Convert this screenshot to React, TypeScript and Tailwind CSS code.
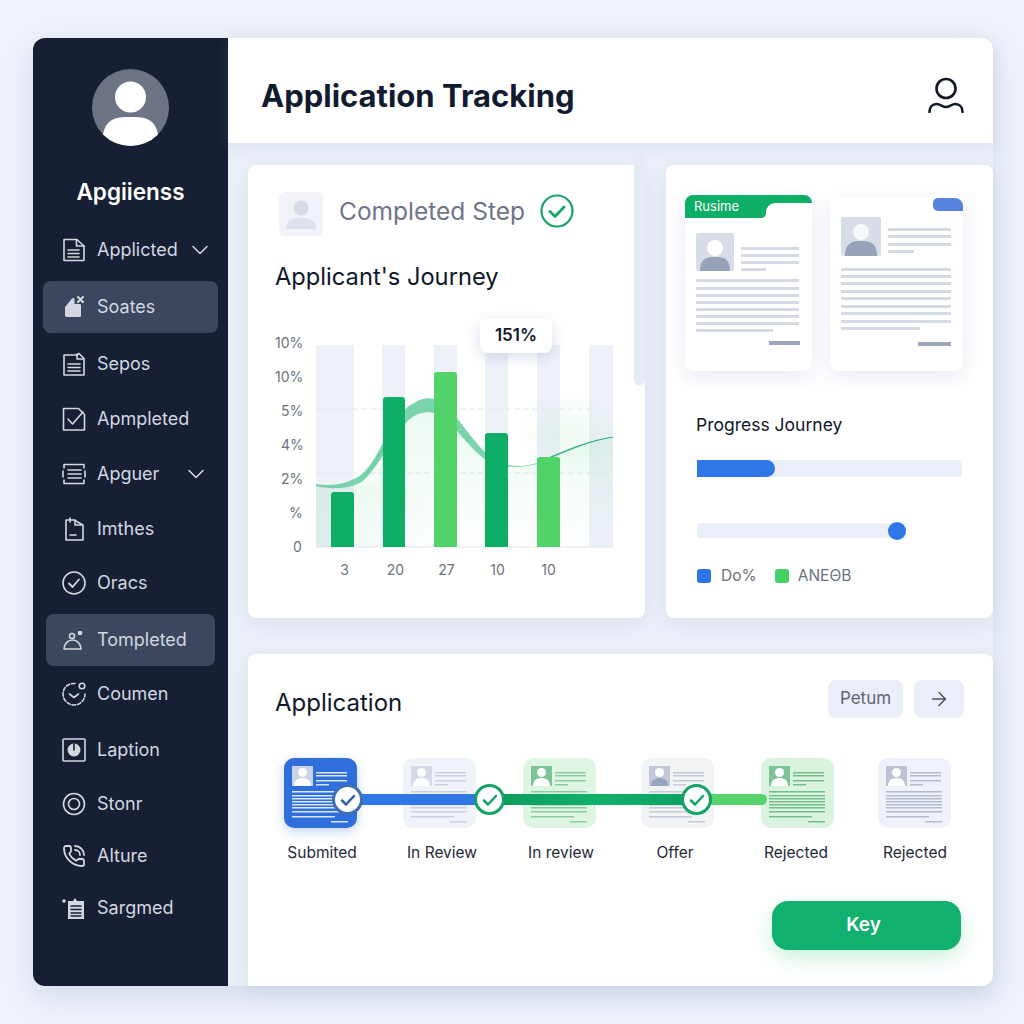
import { ArrowRight, ChevronDown, PhoneCall } from "lucide-react";
import type { ReactNode } from "react";

const iconProps = {
  width: 24,
  height: 24,
  viewBox: "0 0 24 24",
  fill: "none",
  stroke: "currentColor",
  strokeWidth: 1.6,
  strokeLinecap: "round" as const,
  strokeLinejoin: "round" as const,
  className: "shrink-0",
};

const AppliedIcon = () => (
  <svg {...iconProps}>
    <path d="M2 1.500h13l7 6.500v14.500H2z" />
    <path d="M14.500 1.500V8H22M6 12h11M6 15.500h11M6 19h11" />
  </svg>
);

const SoatesIcon = () => (
  <svg {...iconProps}>
    <path d="M3 12l7-8.500c1-1 2.500-.5 2.500 1V9h5c1 0 1.500.5 1.500 1.500V21a1 1 0 0 1-1 1H5c-1.200 0-2-.8-2-2z" fill="currentColor" stroke="none" />
    <path d="M16 2l5 5M21 2l-5 5" strokeWidth={2} />
  </svg>
);

const SeposIcon = () => (
  <svg {...iconProps}>
    <path d="M2 3h13l2-1.500 5 5V23H2z" />
    <path d="M15 2v5h7M6 12h12M6 15.500h12M6 19h12" />
  </svg>
);

const ApmpletedIcon = () => (
  <svg {...iconProps}>
    <path d="M1.500 1.500h15l6 6V23h-21z" />
    <path d="M6 12l4.500 5L21 5" />
  </svg>
);

const ApguerIcon = () => (
  <svg {...iconProps}>
    <path d="M2 6V2.500h20V6M2 18v3.500h20V18M1 9v6M23 9v6" />
    <path d="M6 8h13M6 12h13M6 16h13" />
  </svg>
);

const ImthesIcon = () => (
  <svg {...iconProps}>
    <path d="M12 3H4v20h17V8z" />
    <path d="M8 1v4M13 3v5h7M8 18h6" />
  </svg>
);

const OracsIcon = () => (
  <svg {...iconProps}>
    <circle cx="12" cy="12" r="11" />
    <path d="M7 12.500l3.500 3.500L17 8.500" strokeWidth={1.8} />
  </svg>
);

const TompletedIcon = () => (
  <svg {...iconProps}>
    <circle cx="10" cy="8" r="2.500" />
    <path d="M2 21c0-5 4-9 8.500-9s8.500 4 8.500 9z" />
    <circle cx="18" cy="5" r="2.300" fill="currentColor" stroke="none" />
  </svg>
);

const CoumenIcon = () => (
  <svg {...iconProps}>
    <path d="M13 1.500C6 1 1 6 1 12s5 11 11 11 11-5 11-11" strokeDasharray="3.500 2" />
    <circle cx="20" cy="4" r="2.800" />
    <path d="M7.500 12l4.500 3.500 4.500-3.500" />
  </svg>
);

const LaptionIcon = () => (
  <svg {...iconProps}>
    <rect x="1" y="1" width="22" height="22" rx="1" />
    <circle cx="12" cy="12" r="6.500" fill="currentColor" stroke="none" />
    <path d="M12 6v6" stroke="#161f33" />
  </svg>
);

const StonrIcon = () => (
  <svg {...iconProps}>
    <circle cx="12" cy="12" r="10.500" />
    <circle cx="12" cy="12" r="5.500" />
  </svg>
);

const SargmedIcon = () => (
  <svg {...iconProps}>
    <path d="M6 5h5l2-3 2 3h7v18H6z" fill="currentColor" stroke="none" />
    <path d="M9 10h10M9 13.500h10M9 17h10M9 20h10" stroke="#161f33" />
    <circle cx="2" cy="5" r="1.800" fill="currentColor" stroke="none" />
  </svg>
);

type NavItem = { label: string; icon: ReactNode; gap: string; chevron?: string };

const navItems: NavItem[] = [
  { label: "Applicted", icon: <AppliedIcon />, gap: "mt-0 pl-[29px]", chevron: "ml-[8px]" },
  { label: "Soates", icon: <SoatesIcon />, gap: "mt-[5px] mx-[10px] bg-[#3c465f] pl-[19px]" },
  { label: "Sepos", icon: <SeposIcon />, gap: "mt-[5px] pl-[29px]" },
  { label: "Apmpleted", icon: <ApmpletedIcon />, gap: "mt-[3px] pl-[29px]" },
  { label: "Apguer", icon: <ApguerIcon />, gap: "mt-[3px] pl-[29px]", chevron: "ml-[23px]" },
  { label: "Imthes", icon: <ImthesIcon />, gap: "mt-[3px] pl-[29px]" },
  { label: "Oracs", icon: <OracsIcon />, gap: "mt-[2px] pl-[29px]" },
  { label: "Tompleted", icon: <TompletedIcon />, gap: "mt-[5px] mx-[13px] bg-[#3c465f] pl-[16px]" },
  { label: "Coumen", icon: <CoumenIcon />, gap: "mt-[2px] pl-[29px]" },
  { label: "Laption", icon: <LaptionIcon />, gap: "mt-[4px] pl-[29px]" },
  { label: "Stonr", icon: <StonrIcon />, gap: "mt-[2px] pl-[29px]" },
  { label: "Alture", icon: <PhoneCall size={24} strokeWidth={1.8} className="shrink-0" />, gap: "mt-0 pl-[29px]" },
  { label: "Sargmed", icon: <SargmedIcon />, gap: "mt-0 pl-[29px]" },
];

function Sidebar() {
  return (
    <aside className="w-[195px] shrink-0 rounded-l-xl bg-[#161f33] pt-[31px] text-[#d3d7e0]">
      <div className="mx-auto flex h-[77px] w-[77px] items-center justify-center overflow-hidden rounded-full bg-[#6d7486]">
        <svg width="77" height="77" viewBox="0 0 77 77">
          <circle cx="38.500" cy="28" r="15.500" fill="#fff" />
          <path d="M10 77c0-28 13-29 28.500-29S67 49 67 77z" fill="#fff" />
        </svg>
      </div>
      <div className="mt-[31px] text-center text-[22.500px] leading-[30px] font-semibold text-white">Apgiienss</div>
      <nav className="mt-[17px] flex flex-col">
        {navItems.map((item) => (
          <div key={item.label} className={`flex h-[52px] items-center rounded-lg ${item.gap}`}>
            <span className="flex w-[24px] shrink-0 justify-center">{item.icon}</span>
            <span className="ml-[11px] text-[18px] leading-none">{item.label}</span>
            {item.chevron && <ChevronDown size={28} strokeWidth={1.3} className={`shrink-0 ${item.chevron}`} />}
          </div>
        ))}
      </nav>
    </aside>
  );
}

function JourneyChart() {
  const stripes = [
    [0, 38],
    [66, 23],
    [118, 23],
    [169, 23],
    [221, 23],
    [273, 24],
  ];
  const bars = [
    [15, 147, 23, "#0fae66"],
    [67, 52, 22, "#0fae66"],
    [118, 27, 23, "#52d36a"],
    [169, 88, 23, "#0fae66"],
    [221, 112, 23, "#52d36a"],
  ] as const;

  return (
    <div className="relative mt-[43px] flex">
      <div className="flex h-[220px] w-[27px] flex-col items-start justify-between text-[14px] leading-4 text-[#6b7280]">
        {["10%", "10%", "5%", "4%", "2%", "%", "0"].map((t, i) => (
          <span key={i} className={t === "%" ? "ml-[14px]" : t === "0" ? "ml-[18px]" : t === "10%" ? "" : "ml-[6px]"}>
            {t}
          </span>
        ))}
      </div>
      <div className="ml-[14px] pt-[10px]">
        <svg width="297" height="203" viewBox="0 0 297 203" className="block">
          <defs>
            <linearGradient id="areaFill" x1="0" y1="0" x2="0" y2="1">
              <stop offset="0" stopColor="#34c77b" stopOpacity="0.1" />
              <stop offset="1" stopColor="#34c77b" stopOpacity="0.01" />
            </linearGradient>
            <radialGradient id="glow" cx="0.5" cy="0.5" r="0.5">
              <stop offset="0" stopColor="#47d07f" stopOpacity="0.1" />
              <stop offset="1" stopColor="#47d07f" stopOpacity="0" />
            </radialGradient>
            <linearGradient id="leftFill" x1="0" y1="0" x2="1" y2="0">
              <stop offset="0" stopColor="#2fbf77" stopOpacity="0.08" />
              <stop offset="1" stopColor="#2fbf77" stopOpacity="0" />
            </linearGradient>
          </defs>
          {stripes.map(([x, w]) => (
            <rect key={x} x={x} y="0" width={w} height="202" fill="#eef1f8" />
          ))}
          <rect x="0" y="140" width="120" height="62" fill="url(#leftFill)" />
          <ellipse cx="255" cy="90" rx="55" ry="45" fill="url(#glow)" />
          <path d="M0 64H297M0 128H297" stroke="#e2e6ee" strokeDasharray="6 3" />
          <g transform="translate(0 10)">
            <path
              d="M0 129C12 132 30 132 46 119C66 102 74 58 100 47C108 42 118 42 126 48C142 60 160 92 176 103C190 112 204 113 221 108C245 98 270 86 297 82V192H0Z"
              fill="url(#areaFill)"
            />
            <path
              d="M0 129C12 131 30 131 46 119C66 102 74 58 100 47C108 42 118 42 126 48C142 60 160 92 176 103C190 112 204 113 221 108C245 98 270 86 297 82C270 87 245 99 221 109C204 113 190 113 176 108C160 102 142 74 126 62C118 56 108 56 100 60C80 70 66 110 46 127C30 135 12 134 0 131Z"
              fill="#5fcb9a"
              fillOpacity="0.8"
            />
            <path d="M221 108C245 98 270 86 297 82" fill="none" stroke="#35b27c" strokeWidth="1.200" />
          </g>
          <line x1="0" y1="202" x2="297" y2="202" stroke="#e3e6ee" />
          {bars.map(([x, y, w, color]) => (
            <path
              key={x}
              d={`M${x} 202V${y + 3}a3 3 0 0 1 3-3h${w - 6}a3 3 0 0 1 3 3V202Z`}
              fill={color}
            />
          ))}
          <path d="M46 134C54 125 62 113 67 102" fill="none" stroke="#3cc58a" strokeOpacity="0.5" />
        </svg>
        <div className="mt-[14px] flex pl-[3px] text-[14px] leading-4 text-[#6b7280]">
          {["3", "20", "27", "10", "10"].map((t, i) => (
            <span key={i} className="w-[51px] text-center">
              {t}
            </span>
          ))}
        </div>
      </div>
      <div className="absolute left-[205px] top-[-17px] flex h-[35px] w-[72px] items-center justify-center rounded-lg bg-white text-[17px] font-semibold text-[#111827] shadow-[0_4px_14px_rgba(120,135,190,0.28)]">
        151%
      </div>
    </div>
  );
}

function ResumeLeft() {
  return (
    <div className="relative h-[176px] w-[127px] rounded-lg bg-white shadow-[0_6px_20px_rgba(130,145,195,0.18)]">
      <svg width="127" height="176" viewBox="0 0 127 176" className="block">
        <path d="M0 23V8a8 8 0 0 1 8-8h111a8 8 0 0 1 8 8H90a9 9 0 0 0-9 9a5 5 0 0 1-5 6Z" fill="#0fae66" />
        <rect x="11" y="38" width="38" height="38" rx="2" fill="#d7dce8" />
        <circle cx="30" cy="53" r="8" fill="#fff" />
        <path d="M15 76c0-12 6-14 15-14s15 2 15 14z" fill="#98a3ba" />
        {[52, 59, 66].map((y) => (
          <rect key={y} x="56" y={y} width="58" height="3" fill="#d6dae6" />
        ))}
        <rect x="56" y="73" width="25" height="3" fill="#d6dae6" />
        {[84, 92, 99, 106, 113, 120, 127].map((y) => (
          <rect key={y} x="11" y={y} width="103" height="3" fill="#d6dae6" />
        ))}
        <rect x="11" y="134" width="77" height="3" fill="#d6dae6" />
        <rect x="84" y="146" width="31" height="4" fill="#9ca6b9" />
      </svg>
      <span className="absolute left-[9px] top-[3px] text-[13px] leading-4 text-white">Rusime</span>
    </div>
  );
}

function ResumeRight() {
  return (
    <div className="relative mt-[2px] h-[174px] w-[133px] rounded-lg bg-white shadow-[0_6px_20px_rgba(130,145,195,0.18)]">
      <svg width="133" height="174" viewBox="0 0 133 174" className="block">
        <path d="M103 6a5 5 0 0 1 5-5h17a8 8 0 0 1 8 8v5h-25a5 5 0 0 1-5-5Z" fill="#5682dd" />
        <rect x="11" y="20" width="40" height="39" rx="2" fill="#d7dce8" />
        <circle cx="31" cy="35" r="8" fill="#f7f8fb" />
        <path d="M15 59c0-13 7-15 16-15s16 2 16 15z" fill="#98a3ba" />
        {[31, 38, 46].map((y) => (
          <rect key={y} x="58" y={y} width="63" height="3" fill="#d6dae6" />
        ))}
        <rect x="58" y="53" width="26" height="3" fill="#d6dae6" />
        {[71, 78, 85, 93, 100, 108, 115, 123].map((y) => (
          <rect key={y} x="11" y={y} width="110" height="3" fill="#d6dae6" />
        ))}
        <rect x="11" y="130" width="79" height="3" fill="#d6dae6" />
        <rect x="88" y="145" width="33" height="4" fill="#9ca6b9" />
      </svg>
    </div>
  );
}

type Tone = { bg: string; photo: string; body: string; head: string; line: string };

const tones: Record<string, Tone> = {
  blue: { bg: "#2f6fdc", photo: "#c9d3e8", body: "#fff", head: "#fff", line: "#dbe7fc" },
  gray: { bg: "#f1f3fa", photo: "#d5d9e8", body: "#fff", head: "#fff", line: "#cbd0e0" },
  mint: { bg: "#dff5e3", photo: "#7cc495", body: "#fff", head: "#fff", line: "#8ccb9f" },
  offer: { bg: "#f2f3f5", photo: "#c3c9db", body: "#98a5c0", head: "#fff", line: "#c5cad6" },
  green: { bg: "#d9f3df", photo: "#7cc495", body: "#fff", head: "#fff", line: "#74bd8c" },
  slate: { bg: "#eff2fa", photo: "#bcc3d3", body: "#fff", head: "#fff", line: "#b5bbcf" },
};

function DocThumb({ tone }: { tone: Tone }) {
  return (
    <svg width="73" height="70" viewBox="0 0 73 70" className="block">
      <rect width="73" height="70" rx="10" fill={tone.bg} />
      <rect x="8" y="8" width="21" height="20" fill={tone.photo} />
      <circle cx="18.500" cy="14.500" r="4.500" fill={tone.head} />
      <path d="M10 28c0-6 4-8 8.500-8s8.500 2 8.500 8z" fill={tone.body} />
      {[14, 17, 22].map((y) => (
        <rect key={y} x="32" y={y} width="31" height="1.500" fill={tone.line} />
      ))}
      <rect x="32" y="26" width="13" height="1.500" fill={tone.line} />
      {[33, 37, 40, 43, 46, 49, 53].map((y) => (
        <rect key={y} x="8" y={y} width="56" height="1.500" fill={tone.line} />
      ))}
      <rect x="8" y="58" width="43" height="1.500" fill={tone.line} />
      <rect x="47" y="63" width="17" height="1.500" fill={tone.line} />
    </svg>
  );
}

function CheckBadge({ left, ring, mark }: { left: string; ring: string; mark: string }) {
  return (
    <span className={`absolute top-[26px] flex h-[31px] w-[31px] items-center justify-center rounded-full border-[3px] bg-white ${left} ${ring}`}>
      <svg width="18" height="18" viewBox="0 0 18 18" fill="none">
        <path d="M3 9.500l4 4 8-8.500" stroke={mark} strokeWidth="2.500" strokeLinecap="round" strokeLinejoin="round" />
      </svg>
    </span>
  );
}

const steps = [
  { label: "Submited", tone: tones.blue, box: "shadow-[0_4px_12px_rgba(47,111,220,0.28)]", shift: "translate-x-[1.500px]" },
  { label: "In Review", tone: tones.gray, box: "ml-[46px]", shift: "translate-x-[2.500px]" },
  { label: "In review", tone: tones.mint, box: "ml-[47px]", shift: "translate-x-[1.500px]" },
  { label: "Offer", tone: tones.offer, box: "ml-[45px]", shift: "-translate-x-[2.500px]" },
  { label: "Rejected", tone: tones.green, box: "ml-[47px]", shift: "-translate-x-[1.500px]" },
  { label: "Rejected", tone: tones.slate, box: "ml-[44px]", shift: "translate-x-[0.500px]" },
];

export default function App() {
  return (
    <div className="min-h-screen bg-[#eef2fa] pl-[33px] pt-[38px] font-['Inter',sans-serif]">
      <div className="flex h-[948px] w-[960px] rounded-xl shadow-[0_10px_30px_rgba(120,135,185,0.22)]">
        <Sidebar />
        <main className="flex min-w-0 flex-1 flex-col rounded-r-xl bg-[#ebeff8]">
          <header className="flex h-[105px] items-center justify-between rounded-tr-xl bg-white pl-[33px] pr-[29px] pt-[9px] shadow-[0_4px_16px_rgba(120,135,185,0.14)]">
            <h1 className="text-[31px] font-bold leading-none text-[#111a2e]">Application Tracking</h1>
            <svg width="36" height="36" viewBox="0 0 36 36" fill="none" stroke="#111827" strokeWidth="2.600" strokeLinecap="round">
              <circle cx="18" cy="11.500" r="9.500" />
              <path d="M1.500 35c0-5 3-8 7-8 4 0 6 3 9.500 3s5.500-3 9.500-3c4 0 7 3 7 8" />
            </svg>
          </header>

          <div className="flex flex-1 flex-col pl-[20px] pt-[22px]">
            <div className="flex h-[453px] gap-[21px]">
              {/* Journey */}
              <section className="relative w-[397px] rounded-lg bg-white pl-[27px] pt-[27px] shadow-[0_6px_20px_rgba(120,135,185,0.14)]">
                <div className="absolute right-0 top-[-10px] h-[230px] w-[11px] rounded-b-md bg-[#e6eaf5]" />
                <div className="flex items-center pl-[4px]">
                  <div className="flex h-[44px] w-[44px] items-center justify-center rounded-md bg-[#f1f3f9]">
                    <svg width="32" height="32" viewBox="0 0 32 32">
                      <circle cx="16" cy="10" r="7.500" fill="#d6d9e6" />
                      <path d="M1 31c0-9 6-11 15-11s15 2 15 11z" fill="#dde1ec" />
                    </svg>
                  </div>
                  <span className="mb-[6px] ml-[16px] text-[24.500px] leading-none text-[#6f7488]">Completed Step</span>
                  <svg className="mb-[7px] ml-[15px]" width="34" height="34" viewBox="0 0 34 34" fill="none" stroke="#17a566" strokeLinecap="round" strokeLinejoin="round">
                    <circle cx="17" cy="17" r="15.500" strokeWidth="2.200" />
                    <path d="M10 17.500l5 5 9-9.500" strokeWidth="2.800" />
                  </svg>
                </div>
                <h2 className="mt-[26px] text-[23.700px] font-normal leading-[30px] text-[#0f172a]">Applicant's Journey</h2>
                <JourneyChart />
              </section>

              {/* Resumes and progress */}
              <section className="flex-1 rounded-lg bg-white pl-[19px] pt-[30px] shadow-[0_6px_20px_rgba(120,135,185,0.14)]">
                <div className="flex gap-[18px]">
                  <ResumeLeft />
                  <ResumeRight />
                </div>
                <div className="pl-[12px]">
                  <h3 className="-ml-[1px] mt-[42px] text-[17.500px] font-normal leading-6 text-[#0f172a]">Progress Journey</h3>
                  <div className="mt-[23px] h-[17px] w-[265px] rounded bg-[#e9eef8]">
                    <div className="h-full w-[78px] rounded-l rounded-r-full bg-[#2f76e6]" />
                  </div>
                  <div className="relative mt-[46px] h-[15px] w-[209px] rounded-l bg-[#e9eef8]">
                    <span className="absolute right-0 top-[-1.500px] h-[18px] w-[18px] rounded-full bg-[#2f76e6]" />
                  </div>
                  <div className="mt-[28px] flex items-center text-[15.500px] leading-5 text-[#6b7082]">
                    <span className="h-[14px] w-[14px] rounded-[3px] bg-[#2f76e6]" />
                    <span className="ml-[10px]">Do%</span>
                    <span className="ml-[18px] h-[14px] w-[14px] rounded-[3px] bg-[#46cf67]" />
                    <span className="ml-[9px]">ANEΘB</span>
                  </div>
                </div>
              </section>
            </div>

            {/* Application steps */}
            <section className="mt-[36px] flex-1 rounded-t-lg rounded-br-xl bg-white pt-[26px] shadow-[0_6px_20px_rgba(120,135,185,0.14)]">
              <div className="flex items-center justify-between pl-[27px] pr-[29px]">
                <h2 className="pt-[8px] text-[24px] font-normal leading-none text-[#0f172a]">Application</h2>
                <div className="flex gap-[11px]">
                  <button className="flex h-[38px] w-[75px] items-center justify-center rounded-lg bg-[#eaeef8] text-[17px] text-[#5f6577]">Petum</button>
                  <button className="flex h-[38px] w-[50px] items-center justify-center rounded-lg bg-[#eaeef8] text-[#4b5163]">
                    <ArrowRight size={22} strokeWidth={1.6} />
                  </button>
                </div>
              </div>
              <div className="relative ml-[36px] mr-[42px] mt-[40px] flex">
                {steps.map((step, i) => (
                  <div key={i} className={`flex w-[73px] flex-col items-center ${i === 0 ? "" : step.box}`}>
                    <div className={`rounded-[10px] ${i === 0 ? step.box : ""}`}>
                      <DocThumb tone={step.tone} />
                    </div>
                    <span className={`mt-[16px] whitespace-nowrap text-[15.500px] leading-[18px] text-[#1f2937] ${step.shift}`}>{step.label}</span>
                  </div>
                ))}
                <div className="absolute left-[76px] top-[36px] flex h-[11px] w-[407px] overflow-hidden rounded-r-full">
                  <div className="w-[130px] bg-[#2f76e6]" />
                  <div className="w-[210px] bg-linear-to-r from-[#0d9a5c] via-[#10b06a] to-[#0d9f60]" />
                  <div className="flex-1 bg-[#55d36c]" />
                </div>
                <CheckBadge left="left-[48px]" ring="border-[#3f6fb5]" mark="#2f5fa8" />
                <CheckBadge left="left-[190px]" ring="border-[#12a365]" mark="#12a365" />
                <CheckBadge left="left-[397px]" ring="border-[#12a365]" mark="#12a365" />
              </div>
              <div className="mt-[39px] flex justify-end pr-[32px]">
                <button className="flex h-[49px] w-[189px] items-center justify-center rounded-2xl bg-[#10b06f] pr-[6px] text-[19px] font-semibold text-white shadow-[0_8px_20px_rgba(70,210,130,0.28)]">
                  Key
                </button>
              </div>
            </section>
          </div>
        </main>
      </div>
    </div>
  );
}
